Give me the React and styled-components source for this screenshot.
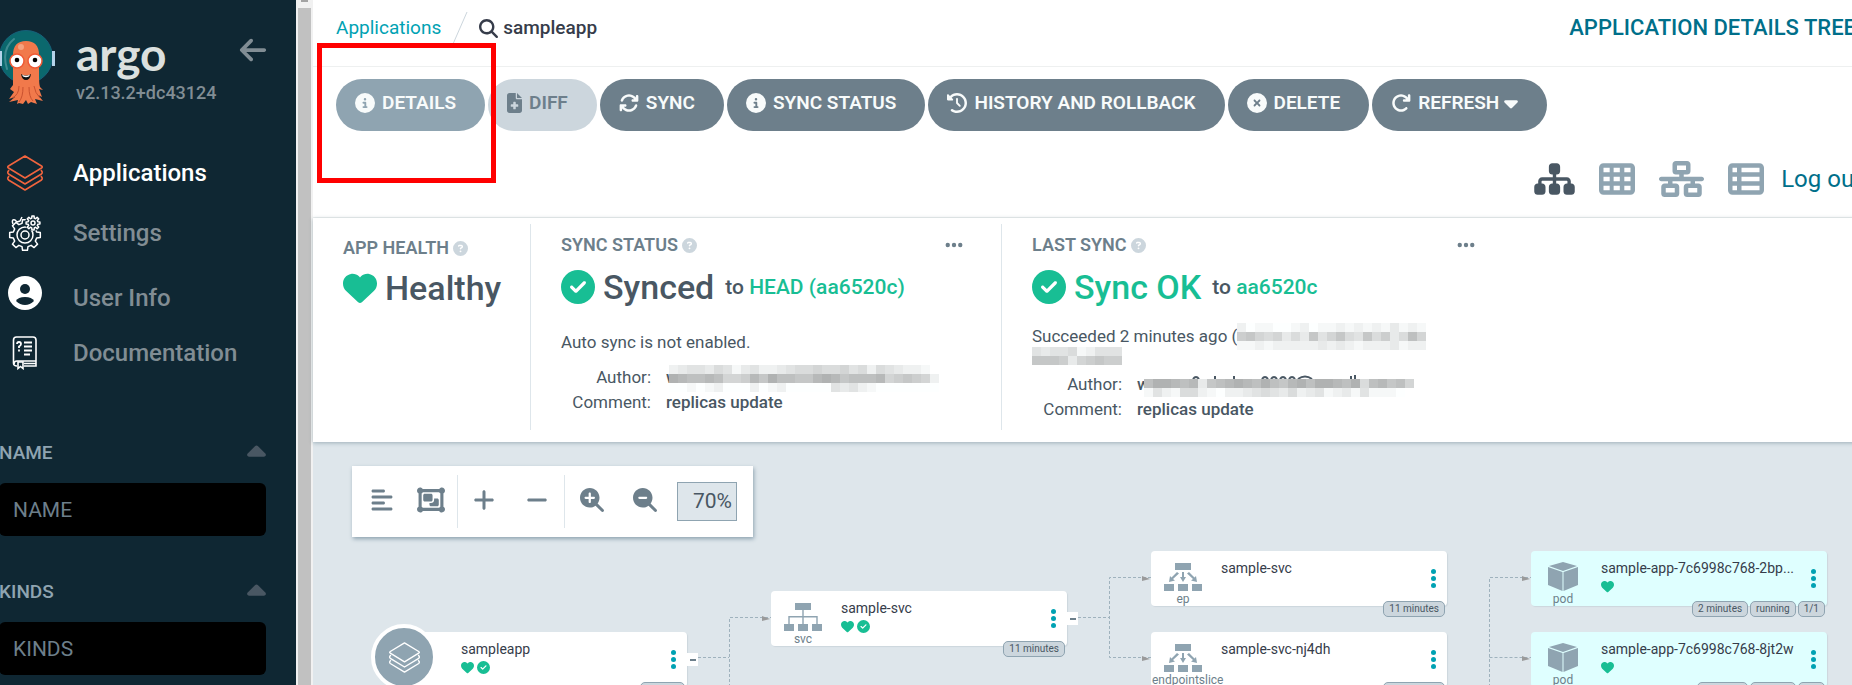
import React from "react";
import styled, { createGlobalStyle, css } from "styled-components";
import {
  FaAlignLeft,
  FaArrowLeft,
  FaArrowRotateRight,
  FaArrowsRotate,
  FaCaretDown,
  FaCaretUp,
  FaCircleCheck,
  FaCircleInfo,
  FaCircleQuestion,
  FaCircleXmark,
  FaClockRotateLeft,
  FaEllipsis,
  FaFileMedical,
  FaHeart,
  FaMagnifyingGlass,
  FaMagnifyingGlassMinus,
  FaMagnifyingGlassPlus,
  FaMinus,
  FaNetworkWired,
  FaObjectGroup,
  FaPlus,
  FaSitemap,
  FaTableCells,
  FaTableList,
} from "react-icons/fa6";

const c = {
  navy: "#0f2733",
  steel: "#6d7f8b",
  mist: "#8fa4b1",
  pale: "#ccd6dd",
  canvas: "#dee6eb",
  slate: "#495763",
  ink: "#363c4a",
  teal: "#00a2b3",
  deepTeal: "#006f8a",
  green: "#18be94",
};

const GlobalStyle = createGlobalStyle`
  * { box-sizing: border-box; }
  body {
    margin: 0;
    overflow: hidden;
    background: #fff;
    color: ${c.slate};
    font: 400 17px/20px Roboto, "Liberation Sans", sans-serif;
  }
  button, input { font: inherit; color: inherit; margin: 0; }
  button { border: 0; padding: 0; background: none; cursor: pointer; }
  a { text-decoration: none; color: inherit; }
  svg { display: block; flex: none; }
`;

/* ---------- frame ---------- */

const Shell = styled.div`
  display: flex;
  width: calc(100% + 32px);
  min-height: 100vh;
  margin-left: -16px;
`;

const Sidebar = styled.aside`
  flex: none;
  width: 312px;
  height: 100vh;
  overflow: hidden;
  padding: 29px 30px 0 15px;
  background: ${c.navy};
`;

const ScrollTrack = styled.div`
  flex: none;
  display: flex;
  flex-direction: column;
  align-items: center;
  width: 17px;
  height: 100vh;
  background: #f1f1f1;
`;

const ScrollThumb = styled.div`
  flex: 1;
  width: 13px;
  margin-top: 6px;
  background: #c1c1c1;
`;

const Main = styled.main`
  flex: 1;
  min-width: 0;
  height: 100vh;
  display: flex;
  flex-direction: column;
`;

/* ---------- sidebar ---------- */

const Brand = styled.div`
  display: flex;
  align-items: flex-start;
  height: 76px;
`;

const BrandText = styled.div`
  flex: 1;
  margin-left: 20px;
`;

const Wordmark = styled.div`
  color: #dbe0df;
  font: 700 46px/50px Lato, sans-serif;
`;

const Version = styled.div`
  font-size: 18px;
  font-weight: 500;
  line-height: 24px;
  color: #818d94;
  margin-top: 2px;
`;

const Collapse = styled.button`
  color: #818d94;
  font-size: 30px;
  margin: 6px -2px 0 0;
`;

const Nav = styled.nav`
  display: flex;
  flex-direction: column;
  gap: 24px;
  margin-top: 50px;
`;

const NavLink = styled.a`
  display: flex;
  align-items: ${(p) => (p.$low ? "flex-end" : "center")};
  height: 36px;
  font-size: 24px;
  line-height: 26px;
  font-weight: 500;
  color: ${(p) => (p.$active ? "#fff" : "#818d94")};
`;

const NavIcon = styled.span`
  display: flex;
  align-self: center;
  justify-content: center;
  width: 38px;
  margin: 0 29px 0 7px;
`;

const Filter = styled.section`
  margin-top: ${(p) => (p.$first ? 70 : 44)}px;
`;

const FilterHead = styled.div`
  display: flex;
  justify-content: space-between;
  align-items: center;
  height: 24px;
  font-size: 19px;
  font-weight: 500;
  color: ${c.mist};

  button { color: ${c.slate}; font-size: 30px; }
  svg { width: 19px; }
`;

const FilterInput = styled.input`
  display: block;
  width: 100%;
  height: 53px;
  margin-top: 18px;
  padding: 0 14px;
  border: 0;
  border-radius: 6px;
  background: #000;
  font-size: 21px;
  &::placeholder { color: ${c.steel}; opacity: 1; }
`;

/* ---------- top bars ---------- */

const TopBar = styled.header`
  flex: none;
  display: flex;
  align-items: center;
  height: 67px;
  padding: 0 12px 10px 23px;
  border-bottom: 1px solid #eef0f0;
  font-size: 19px;
`;

const Crumb = styled.a`
  color: ${c.teal};
`;

const Current = styled.span`
  display: flex;
  align-items: center;
  gap: 5px;
  font-weight: 500;
  color: ${c.ink};
`;

const PageTitle = styled.h1`
  flex: none;
  margin: 0 0 0 auto;
  font-size: 22px;
  font-weight: 500;
  color: ${c.deepTeal};
`;

const Actions = styled.div`
  flex: none;
  display: flex;
  gap: 3px;
  padding: 12px 23px 0;
`;

const ActionButton = styled.button`
  display: flex;
  align-items: center;
  gap: 7px;
  height: 52px;
  padding: 0 29px 4px 19px;
  border-radius: 26px;
  font-size: 19px;
  font-weight: 600;
  white-space: nowrap;
  background: ${c.steel};
  color: #f8fbfb;
  svg { width: ${(p) => p.$icon || 20}px; font-size: 20px; }
  ${(p) => p.$tone === "light" && css`background: ${c.mist};`}
  ${(p) => p.$tone === "off" && css`background: ${c.pale}; color: ${c.steel};`}
`;

const MenuLabel = styled.span`
  display: flex;
  align-items: center;
  gap: 5px;
  svg { width: 14px; font-size: 22px; }
`;

const DetailsSlot = styled.div`
  position: relative;
`;

const Marker = styled.div`
  position: absolute;
  z-index: 2;
  inset: -36px -11px -52px -19px;
  border: 5px solid #f00;
  pointer-events: none;
`;

const Views = styled.div`
  flex: none;
  display: flex;
  align-items: center;
  justify-content: flex-end;
  gap: 24px;
  height: 87px;
  padding: 9px 6px 0 0;
  border-bottom: 1px solid #eef0f0;
  color: ${c.mist};
`;

const ViewButton = styled.button`
  color: ${(p) => (p.$active ? c.slate : "inherit")};
  font-size: 36px;
  svg { width: ${(p) => p.$width}px; }
`;

const LogOut = styled.a`
  margin-left: -7px;
  font-size: 24px;
  color: ${c.deepTeal};
`;

/* ---------- status panel ---------- */

const StatusPanel = styled.section`
  position: relative;
  z-index: 1;
  flex: none;
  display: flex;
  padding: 6px 0 12px;
  background: #fff;
  box-shadow: 0 1px 4px rgba(80, 110, 125, 0.45);
`;

const StatusItem = styled.div`
  width: ${(p) => p.$width}px;
  min-height: 206px;
  padding: ${(p) => p.$top || 11}px 37px 0 30px;
  & + & { border-left: 1px solid ${c.canvas}; }
`;

const StatusLabel = styled.div`
  display: flex;
  align-items: center;
  gap: 4px;
  height: 20px;
  font-size: 18px;
  font-weight: 600;
  color: ${c.steel};
  white-space: nowrap;
  svg { font-size: 15px; color: ${c.pale}; }
  button { margin-left: auto; }
  button svg { font-size: 20px; color: ${c.steel}; }
`;

const StatusValue = styled.div`
  display: flex;
  align-items: center;
  height: 40px;
  margin-top: ${(p) => (p.$tight ? 10 : 12)}px;
  font-size: 34px;
  font-weight: 500;
  white-space: nowrap;
  color: ${(p) => (p.$ok ? c.green : c.slate)};
  svg { margin-right: 8px; color: ${c.green}; }
`;

const Revision = styled.span`
  margin-left: 11px;
  font-size: 21px;
  color: ${c.slate};
  a { color: ${c.green}; }
`;

const Note = styled.div`
  display: flex;
  flex-direction: column;
  margin-top: ${(p) => p.$top}px;
`;

const NoteLine = styled.div`
  display: flex;
  align-items: center;
  height: 20px;
  white-space: nowrap;
`;

const Meta = styled.dl`
  display: grid;
  grid-template-columns: 90px 1fr;
  column-gap: 15px;
  margin: ${(p) => p.$top}px 0 0;
  line-height: 25px;
  dt { text-align: right; }
  dd { margin: 0; font-weight: 500; }
`;

const Covered = styled.span`
  position: relative;
  svg { position: absolute; left: ${(p) => p.$left}px; top: ${(p) => p.$top}px; overflow: visible; }
`;

/* Pixelated cover over private text: one string per row, one hex digit of darkness per cell.
   `peek` draws the letter tops that show above the cover. */
function Mosaic({ rows, peek }) {
  const cols = Math.max(...rows.map((r) => r.length));
  return (
    <svg width={cols * 9} height={rows.length * 9} aria-hidden="true">
      {peek && <path d={peek} fill="none" stroke={c.slate} strokeWidth="2" />}
      {rows.map((row, y) =>
        [...row].map((d, x) => {
          const v = 255 - parseInt(d, 16) * 7;
          return (
            <rect
              key={`${x}-${y}`}
              x={x * 9}
              y={y * 9}
              width="9"
              height="9"
              shapeRendering="crispEdges"
              fill={`rgb(${v - 2},${v},${v})`}
            />
          );
        })
      )}
    </svg>
  );
}

/* ---------- resource tree ---------- */

const Canvas = styled.section`
  position: relative;
  flex: 1;
  min-height: 240px;
  overflow: hidden;
  background: ${c.canvas};
`;

const ZoomBar = styled.div`
  display: inline-flex;
  align-items: center;
  height: 71px;
  margin: 24px 0 0 39px;
  padding: 0 16px 0 7px;
  background: #fff;
  box-shadow: 1px 2px 4px ${c.mist};
  color: ${c.steel};
`;

const ZoomButton = styled.button`
  display: flex;
  align-items: center;
  justify-content: center;
  width: ${(p) => p.$width || 53}px;
  height: 53px;
  padding-bottom: 4px;
  font-size: 24px;
  border-left: ${(p) => (p.$split ? `1px solid ${c.canvas}` : "0")};
`;

const ZoomValue = styled.input`
  width: 60px;
  height: 39px;
  margin-left: 6px;
  padding: 0 4px 2px 0;
  border: 1px solid ${c.mist};
  border-radius: 0;
  background: ${c.canvas};
  color: ${c.slate};
  font-size: 21px;
  text-align: right;
`;

const Edges = styled.svg`
  position: absolute;
  left: 0;
  top: 0;
  path { fill: none; stroke: #9fb2bd; stroke-dasharray: 3 2; }
  polygon { fill: #9a9a9a; }
`;

const Node = styled.article`
  position: absolute;
  left: ${(p) => p.$x}px;
  top: ${(p) => p.$y}px;
  width: 296px;
  height: 55px;
  border-radius: 4px;
  background: ${(p) => (p.$pod ? "#dfffff" : "#fff")};
  box-shadow: 1px 1px 1px ${c.pale};
  display: flex;
`;

const NodeKind = styled.div`
  flex: none;
  display: flex;
  flex-direction: column;
  align-items: center;
  width: 64px;
  padding-top: 11px;
  color: ${c.mist};
  span {
    max-width: 62px;
    margin-top: 1px;
    font-size: 12px;
    line-height: 14px;
    color: ${c.steel};
  }
`;

const AppBadge = styled.div`
  position: absolute;
  left: -20px;
  top: -8px;
  display: flex;
  align-items: center;
  justify-content: center;
  width: 66px;
  height: 66px;
  border-radius: 50%;
  border: 4px solid #fff;
  background: ${c.mist};
`;

const NodeText = styled.div`
  flex: 1;
  min-width: 0;
  margin-left: 6px;
  padding-top: 7px;
`;

const NodeName = styled.div`
  font-size: 14px;
  line-height: 20px;
  color: ${c.ink};
  white-space: nowrap;
`;

const NodeState = styled.div`
  display: flex;
  gap: 3px;
  margin-top: 2px;
  font-size: 13px;
  color: ${c.green};
`;

const NodeMenu = styled.button`
  flex: none;
  display: flex;
  flex-direction: column;
  align-items: center;
  justify-content: center;
  gap: 2px;
  width: 28px;
  padding-bottom: 1px;
  color: ${c.teal};
  i { width: 5px; height: 5px; border-radius: 50%; background: currentColor; }
`;

const Toggle = styled.button`
  position: absolute;
  left: 296px;
  top: 21px;
  display: flex;
  align-items: center;
  justify-content: center;
  width: 11px;
  height: 13px;
  background: #fff;
`;

const ToggleBar = styled.i`
  width: 6px;
  height: 2px;
  background: ${c.steel};
`;

const Tags = styled.div`
  position: absolute;
  right: 2px;
  top: 50px;
  display: flex;
  gap: 2px;
  span {
    height: 16px;
    padding: 0 5px;
    border: 1px solid ${c.mist};
    border-radius: 5px;
    background: ${c.pale};
    font-size: 10px;
    line-height: 14px;
    white-space: nowrap;
  }
`;

/* ---------- drawings ---------- */

function Octopus() {
  return (
    <svg width="57" height="76" viewBox="0 0 57 76" aria-hidden="true">
      <circle cx="27" cy="28" r="26.500" fill="#0b686d" stroke="#17607a" />
      <rect x="0" y="22" width="3" height="15" fill="#b5d3ea" />
      <rect x="53" y="22" width="3" height="15" fill="#b5d3ea" />
      <path d="M15 10Q2 20 8 40" fill="none" stroke="#3f8a90" strokeWidth="2" strokeLinecap="round" />
      <path d="M14 26Q14 12 27 12T40 26V46Q40 55 41 58L44 61L40 60L43 68L39 66L44 72L36 70L38 75L32 73L29 75L27 71L24 75L20 74L18 75L19 71L10 73L16 68L10 70L15 63L11 60L14 56Z" fill="#f1794b" />
      <path d="M20 57Q20 66 13 69M24 58Q24 68 20 73M30 58Q30 68 34 72M35 57Q36 64 41 69" fill="none" stroke="#c9512f" strokeWidth="1" />
      <circle cx="22" cy="18" r="3" fill="#f6a27f" />
      <circle cx="18" cy="32" r="7" fill="#fff" stroke="#ef5a35" strokeWidth="1.5" />
      <circle cx="36" cy="32" r="7" fill="#fff" stroke="#ef5a35" strokeWidth="1.5" />
      <circle cx="18" cy="31" r="2.3" />
      <circle cx="36" cy="31" r="2.3" />
      <path d="M22 45Q27 48 32 45Q31 51 27 51T22 45" fill="#111" />
      <path d="M23 45.500Q27 48 31 45.500L30 47.500Q27 49 24 47.500Z" fill="#fff" />
    </svg>
  );
}

function Layers({ width, height, color }) {
  return (
    <svg width={width} height={height} viewBox="0 0 38 36" fill="none" stroke={color} strokeWidth="1.600" strokeLinejoin="round" aria-hidden="true">
      <path d="M19 1L35.500 11Q37 12 35.500 13L19 23L2.500 13Q1 12 2.500 11Z" />
      <path d="M3 15L1.800 17Q1.500 18 2.500 19L19 29L35.500 19Q36.500 18 36.200 17L35 15" />
      <path d="M3 21L1.800 23Q1.500 24 2.500 25L19 35L35.500 25Q36.500 24 36.200 23L35 21" />
    </svg>
  );
}

function gear(cx, cy, r, depth, teeth) {
  const pts = [];
  const step = (Math.PI * 2) / teeth;
  for (let i = 0; i < teeth; i++) {
    [[-0.32, r - depth], [-0.2, r], [0.2, r], [0.32, r - depth]].forEach(([o, rad]) => {
      const a = (i + o) * step;
      pts.push(`${(cx + rad * Math.sin(a)).toFixed(2)} ${(cy - rad * Math.cos(a)).toFixed(2)}`);
    });
  }
  return `M${pts.join("L")}Z`;
}

function Gears() {
  return (
    <svg width="34" height="36" viewBox="0 0 34 36" fill="none" stroke="#fff" strokeWidth="1.500" strokeLinejoin="round" aria-hidden="true">
      <path d={gear(17, 20, 15.5, 3.5, 8)} />
      <circle cx="17" cy="20" r="8" />
      <circle cx="17" cy="20" r="4" />
      <circle cx="25" cy="8" r="8" fill={c.navy} stroke="none" />
      <path d={gear(25, 8, 7, 2, 8)} />
      <circle cx="25" cy="8" r="2" />
      <path d="M5 9Q3 4 7 5L9 7L12 6L14 2" />
    </svg>
  );
}

function UserCircle() {
  return (
    <svg width="34" height="34" viewBox="0 0 34 34" aria-hidden="true">
      <circle cx="17" cy="17" r="17" fill="#fff" />
      <circle cx="17" cy="13" r="5" fill={c.navy} />
      <path d="M8 25Q10 21 17 21T26 25Q22 29 17 29T8 25Z" fill={c.navy} />
    </svg>
  );
}

function Book() {
  return (
    <svg width="26" height="34" viewBox="0 0 26 34" fill="none" stroke="#fff" strokeWidth="1.600" aria-hidden="true">
      <path d="M5 30Q1.500 30 1.500 27V4Q1.500 1 4.500 1H21Q24 1 24 4V30H12" />
      <path d="M2 28Q2 25 5 25H24M12 27.500H24" />
      <path d="M6 26V32.500L8.500 30.500L11 32.500V26Z" fill={c.navy} />
      <path d="M5 8Q5 6 7 6T9 8Q9 9.500 7 10.500V12M7 13.500V15.500" strokeWidth="1.800" />
      <path d="M12 6.500H20M12 10.500H20M12 14.500H20M12 18.500H18" strokeWidth="1.800" />
    </svg>
  );
}

function ServiceIcon() {
  return (
    <svg width="38" height="29" viewBox="0 0 38 29" fill={c.mist} aria-hidden="true">
      <path d="M11 1H27V8H19.700V14H33.700V22H38V29H28V22H32.300V15.400H19.700V22H24V29H14V22H18.300V15.400H5.700V22H10V29H0V22H4.300V14H18.300V8H11Z" />
    </svg>
  );
}

function EndpointIcon() {
  return (
    <svg width="38" height="29" viewBox="0 0 38 29" fill={c.mist} aria-hidden="true">
      <path d="M11 1H27V8H11ZM0 22H10V29H0ZM14 22H24V29H14ZM28 22H38V29H28Z" />
      <path d="M18 10H20V15H22L19 20L16 15H18ZM13 10L15 11.500L9 17L11 18.500L5 20L6 14L7.500 15.500ZM25 10L23 11.500L29 17L27 18.500L33 20L32 14L30.500 15.500Z" />
    </svg>
  );
}

function PodIcon() {
  return (
    <svg width="30" height="29" viewBox="0 0 30 29" fill={c.mist} aria-hidden="true">
      <path d="M15 0L29 4L15 9L1 4ZM0 5L14.500 10V29L0 23ZM30 5L15.500 10V29L30 23Z" />
    </svg>
  );
}

const kindIcons = { svc: ServiceIcon, ep: EndpointIcon, endpointslice: EndpointIcon, pod: PodIcon };

function TreeNode({ x, y, kind, name, healthy, synced, toggle, tags }) {
  const Icon = kindIcons[kind];
  return (
    <Node $x={x} $y={y} $pod={kind === "pod"}>
      <NodeKind>
        {Icon ? (
          <>
            <Icon />
            <span>{kind}</span>
          </>
        ) : (
          <AppBadge>
            <Layers width={33} height={31} color="#fff" />
          </AppBadge>
        )}
      </NodeKind>
      <NodeText>
        <NodeName>{name}</NodeName>
        <NodeState>
          {healthy && <FaHeart />}
          {synced && <FaCircleCheck />}
        </NodeState>
      </NodeText>
      <NodeMenu aria-label={`${name} menu`}>
        <i />
        <i />
        <i />
      </NodeMenu>
      {toggle && (
        <Toggle aria-label="Collapse">
          <ToggleBar />
        </Toggle>
      )}
      <Tags>
        {tags.map((t) => (
          <span key={t}>{t}</span>
        ))}
      </Tags>
    </Node>
  );
}

const nodes = [
  { x: 78, y: 190, kind: "app", name: "sampleapp", healthy: true, synced: true, toggle: true, tags: ["2 hours"] },
  { x: 458, y: 149, kind: "svc", name: "sample-svc", healthy: true, synced: true, toggle: true, tags: ["11 minutes"] },
  { x: 838, y: 109, kind: "ep", name: "sample-svc", tags: ["11 minutes"] },
  { x: 838, y: 190, kind: "endpointslice", name: "sample-svc-nj4dh", tags: ["11 minutes"] },
  { x: 1218, y: 109, kind: "pod", name: "sample-app-7c6998c768-2bp...", healthy: true, tags: ["2 minutes", "running", "1/1"] },
  { x: 1218, y: 190, kind: "pod", name: "sample-app-7c6998c768-8jt2w", healthy: true, tags: ["1 minute", "running", "1/1"] },
];

const arrows = [
  [457, 175],
  [837, 135],
  [837, 215],
  [1217, 135],
  [1217, 215],
];

function ResourceTree() {
  return (
    <Canvas>
      <Edges width="1600" height="400" aria-hidden="true">
        <path d="M385 215.500H416M416.500 400V175.500H458" />
        <path d="M765 175.500H796M838 215.500H796.500V135.500H838" />
        <path d="M1176.500 400V135.500H1218M1176.500 215.500H1218" />
        {arrows.map(([x, y]) => (
          <polygon key={`${x}-${y}`} points={`${x - 8},${y - 1} ${x},${y + 2} ${x - 8},${y + 4}`} />
        ))}
      </Edges>
      {nodes.map((n) => (
        <TreeNode key={`${n.kind}-${n.name}`} {...n} />
      ))}
      <ZoomBar>
        <ZoomButton $width={45} aria-label="Compact view"><FaAlignLeft /></ZoomButton>
        <ZoomButton aria-label="Group nodes"><FaObjectGroup size={28} /></ZoomButton>
        <ZoomButton $split aria-label="Expand all"><FaPlus /></ZoomButton>
        <ZoomButton $width={54} aria-label="Collapse all"><FaMinus /></ZoomButton>
        <ZoomButton $split $width={54} aria-label="Zoom in"><FaMagnifyingGlassPlus /></ZoomButton>
        <ZoomButton aria-label="Zoom out"><FaMagnifyingGlassMinus /></ZoomButton>
        <ZoomValue aria-label="Zoom level" defaultValue="70%" />
      </ZoomBar>
    </Canvas>
  );
}

/* ---------- page ---------- */

const navItems = [
  { label: "Applications", icon: <Layers width={38} height={36} color="#f0643e" />, active: true },
  { label: "Settings", icon: <Gears /> },
  { label: "User Info", icon: <UserCircle />, low: true },
  { label: "Documentation", icon: <Book /> },
];

const actions = [
  { label: "DIFF", Icon: FaFileMedical, icon: 15, tone: "off" },
  { label: "SYNC", Icon: FaArrowsRotate },
  { label: "SYNC STATUS", Icon: FaCircleInfo },
  { label: "HISTORY AND ROLLBACK", Icon: FaClockRotateLeft },
  { label: "DELETE", Icon: FaCircleXmark },
];

const views = [
  { label: "Tree", Icon: FaSitemap, width: 41, active: true },
  { label: "Pods", Icon: FaTableCells, width: 36 },
  { label: "Network", Icon: FaNetworkWired, width: 45 },
  { label: "List", Icon: FaTableList, width: 36 },
];

export default function App() {
  return (
    <>
      <GlobalStyle />
      <Shell>
        <Sidebar>
          <Brand>
            <Octopus />
            <BrandText>
              <Wordmark>argo</Wordmark>
              <Version>v2.13.2+dc43124</Version>
            </BrandText>
            <Collapse aria-label="Collapse sidebar"><FaArrowLeft /></Collapse>
          </Brand>
          <Nav>
            {navItems.map((n) => (
              <NavLink key={n.label} href="#" $active={n.active} $low={n.low}>
                <NavIcon>{n.icon}</NavIcon>
                {n.label}
              </NavLink>
            ))}
          </Nav>
          {["NAME", "KINDS"].map((f, i) => (
            <Filter key={f} $first={i === 0}>
              <FilterHead>
                <label htmlFor={f}>{f}</label>
                <button aria-label={`Collapse ${f}`}><FaCaretUp /></button>
              </FilterHead>
              <FilterInput id={f} placeholder={f} />
            </Filter>
          ))}
        </Sidebar>
        <ScrollTrack>
          <svg width="7" height="2" aria-hidden="true"><rect width="7" height="2" fill="#a3a3a3" /></svg>
          <ScrollThumb />
        </ScrollTrack>
        <Main>
          <TopBar>
            <Crumb href="#">Applications</Crumb>
            <svg width="38" height="34" aria-hidden="true"><path d="M26 1L12 33" stroke={c.pale} /></svg>
            <Current>
              <FaMagnifyingGlass />
              sampleapp
            </Current>
            <PageTitle>APPLICATION DETAILS TREE</PageTitle>
          </TopBar>
          <Actions>
            <DetailsSlot>
              <ActionButton $tone="light"><FaCircleInfo />DETAILS</ActionButton>
              <Marker />
            </DetailsSlot>
            {actions.map(({ label, Icon, icon, tone }) => (
              <ActionButton key={label} $tone={tone} $icon={icon} disabled={tone === "off"}>
                <Icon />
                {label}
              </ActionButton>
            ))}
            <ActionButton>
              <FaArrowRotateRight />
              <MenuLabel>REFRESH<FaCaretDown /></MenuLabel>
            </ActionButton>
          </Actions>
          <Views>
            {views.map(({ label, Icon, width, active }) => (
              <ViewButton key={label} $active={active} $width={width} aria-label={label}><Icon /></ViewButton>
            ))}
            <LogOut href="#">Log out</LogOut>
          </Views>
          <StatusPanel>
            <StatusItem $width={217} $top={14}>
              <StatusLabel>APP HEALTH<FaCircleQuestion /></StatusLabel>
              <StatusValue $tight><FaHeart />Healthy</StatusValue>
            </StatusItem>
            <StatusItem $width={471}>
              <StatusLabel>
                SYNC STATUS<FaCircleQuestion />
                <button aria-label="Sync status details"><FaEllipsis /></button>
              </StatusLabel>
              <StatusValue>
                <FaCircleCheck />Synced
                <Revision>to <a href="#">HEAD (aa6520c)</a></Revision>
              </StatusValue>
              <Note $top={25}><NoteLine>Auto sync is not enabled.</NoteLine></Note>
              <Meta $top={13}>
                <dt>Author:</dt>
                <dd>
                  <Covered $left={3} $top={-2}>
                    w
                    <Mosaic rows={["23443541342234556556452543221", "BA99A9667A8B9988ABA8999A678762", "001012000201200000434210000000"]} />
                  </Covered>
                </dd>
                <dt>Comment:</dt>
                <dd>replicas update</dd>
              </Meta>
            </StatusItem>
            <StatusItem $width={512}>
              <StatusLabel>
                LAST SYNC<FaCircleQuestion />
                <button aria-label="Last sync details"><FaEllipsis /></button>
              </StatusLabel>
              <StatusValue $ok>
                <FaCircleCheck />Sync OK
                <Revision>to <a href="#">aa6520c</a></Revision>
              </StatusValue>
              <Note $top={19}>
                <NoteLine>
                  Succeeded 2 minutes ago (
                  <Mosaic rows={["201100120112121213121", "786563538468548573596", "112122222323212223122"]} />
                </NoteLine>
                <NoteLine><Mosaic rows={["4344512444", "8887367877"]} /></NoteLine>
              </Note>
              <Meta $top={6}>
                <dt>Author:</dt>
                <dd>
                  <Covered $left={7} $top={5}>
                    w
                    <Mosaic
                      rows={["9BBA9A389ABA9B98AB9BBA9B59A896", "14215521022345435234123141110"]}
                      peek="M49 0q3 -4 6 0M71 0v-3M90 0v-3M118 0q3 -4 6 0M127 0q3 -4 6 0M136 0q3 -4 6 0M145 0q3 -4 6 0M154 0q7 -5 14 0M207 0v-3M211 0v-4"
                    />
                  </Covered>
                </dd>
                <dt>Comment:</dt>
                <dd>replicas update</dd>
              </Meta>
            </StatusItem>
          </StatusPanel>
          <ResourceTree />
        </Main>
      </Shell>
    </>
  );
}
